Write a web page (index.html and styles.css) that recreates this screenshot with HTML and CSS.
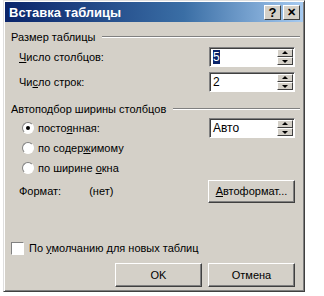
FILE: index.html
```html
<!doctype html>
<html lang="ru">
<head>
  <meta charset="UTF-8">
  <title>Вставка таблицы</title>
  <link rel="stylesheet" href="styles.css">
</head>
<body>
  <div class="dialog">
    <div class="titlebar">
      <span class="title">Вставка таблицы</span>
      <span class="tbtn">?</span>
      <span class="tbtn close">&#x2715;</span>
    </div>
    <div class="content">
      <div class="group">
        <div class="group-head"><span>Размер таблицы</span><i></i></div>
        <div class="row">
          <span><u>Ч</u>исло столбцов:</span>
          <div class="spin"><span class="value"><b class="sel">5</b></span><span class="arrows"><em class="up"></em><em class="down"></em></span></div>
        </div>
        <div class="row">
          <span>Чи<u>с</u>ло строк:</span>
          <div class="spin"><span class="value">2</span><span class="arrows"><em class="up"></em><em class="down"></em></span></div>
        </div>
      </div>
      <div class="group">
        <div class="group-head"><span>Автоподбор ширины столбцов</span><i></i></div>
        <div class="row opt-row">
          <span class="opt"><span class="radio checked"></span><span>посто<u>я</u>нная:</span></span>
          <div class="spin"><span class="value">Авто</span><span class="arrows"><em class="up"></em><em class="down"></em></span></div>
        </div>
        <div class="line"><span class="opt"><span class="radio"></span><span>по содер<u>ж</u>имому</span></span></div>
        <div class="line"><span class="opt"><span class="radio"></span><span>по ширине <u>о</u>кна</span></span></div>
        <div class="row fmt">
          <span class="format"><span>Формат:</span><span>(нет)</span></span>
          <div class="button"><u>А</u>втоформат...</div>
        </div>
      </div>
      <div class="check"><span class="box"></span><span>По <u>у</u>молчанию для новых таблиц</span></div>
      <div class="buttons">
        <div class="button">OK</div>
        <div class="button">Отмена</div>
      </div>
    </div>
  </div>
</body>
</html>
```

FILE: styles.css
```css
body {
  margin: 0;
  background: #ffffff;
  font-family: "Liberation Sans", Arial, sans-serif;
  font-size: 11px;
  color: #000000;
}

.dialog {
  width: 302px;
  height: 292px;
  margin: 0 0 0 3px;
  background: #d4d0c8;
  border: 1px solid;
  border-color: #dfdfdf #404040 #404040 #dfdfdf;
  box-shadow: inset 1px 1px 0 #ffffff, inset -1px -1px 0 #808080;
  padding: 1px;
  box-sizing: border-box;
}

.titlebar {
  height: 20px;
  display: flex;
  align-items: center;
  padding: 0 3px 0 4px;
  background: linear-gradient(to right, #0a246a, #3a6ea5 60%, #a6caf0);
  color: #ffffff;
}

.title {
  flex: 1;
  font-weight: bold;
  font-size: 13px;
}

.tbtn {
  width: 15px;
  height: 13px;
  margin-left: 2px;
  background: #d4d0c8;
  color: #000000;
  font-weight: bold;
  font-size: 13px;
  line-height: 13px;
  text-align: center;
  border: 1px solid;
  border-color: #ffffff #404040 #404040 #ffffff;
}

.tbtn.close {
  font-size: 11px;
}

.content {
  padding: 6px 8px 0 6px;
}

.group-head {
  display: flex;
  align-items: center;
  height: 18px;
}

.group-head i {
  flex: 1;
  margin-left: 7px;
  margin-right: -5px;
  height: 0;
  border-top: 1px solid #808080;
  border-bottom: 1px solid #ffffff;
}

.row {
  display: flex;
  justify-content: space-between;
  align-items: center;
  height: 22px;
  margin-top: 3px;
  padding-left: 8px;
}

.group-head + .row {
  margin-top: 0;
}

.group + .group {
  margin-top: 7px;
}

.opt-row {
  height: 20px;
  padding-left: 11px;
}

.line {
  display: flex;
  align-items: center;
  height: 20px;
  padding-left: 11px;
}

.spin {
  width: 86px;
  height: 20px;
  display: flex;
  background: #ffffff;
  border: 1px solid;
  border-color: #808080 #ffffff #ffffff #808080;
  box-shadow: inset 1px 1px 0 #404040;
  box-sizing: border-box;
}

.value {
  flex: 1;
  padding: 2px 0 0 3px;
  font-size: 12px;
}

.sel {
  font-weight: normal;
  background: #0a246a;
  color: #ffffff;
}

.arrows {
  width: 16px;
  display: flex;
  flex-direction: column;
  padding: 1px 1px 1px 0;
}

.arrows em {
  flex: 1;
  position: relative;
  background: #d4d0c8;
  border: 1px solid;
  border-color: #ffffff #404040 #404040 #ffffff;
}

.arrows em::after {
  content: '';
  position: absolute;
  left: 4px;
  border: 3px solid transparent;
}

.arrows em.up::after {
  top: -2px;
  border-bottom: 3px solid #000000;
}

.arrows em.down::after {
  top: 2px;
  border-top: 3px solid #000000;
}

.opt {
  display: flex;
  align-items: center;
}

.radio {
  width: 10px;
  height: 10px;
  margin-right: 4px;
  border-radius: 50%;
  background: #ffffff;
  border: 1px solid;
  border-color: #808080 #ffffff #ffffff #808080;
  position: relative;
}

.radio.checked::after {
  content: '';
  position: absolute;
  left: 3px;
  top: 3px;
  width: 4px;
  height: 4px;
  border-radius: 50%;
  background: #000000;
}

.row.fmt {
  height: 26px;
  margin-top: 0;
}

.format {
  display: flex;
  gap: 28px;
}

.button {
  width: 87px;
  height: 23px;
  line-height: 21px;
  text-align: center;
  background: #d4d0c8;
  border: 1px solid;
  border-color: #ffffff #404040 #404040 #ffffff;
  box-shadow: inset -1px -1px 0 #808080;
  box-sizing: border-box;
}

.check {
  display: flex;
  align-items: center;
  margin-top: 34px;
  height: 20px;
}

.box {
  width: 11px;
  height: 11px;
  margin-right: 5px;
  background: #ffffff;
  border: 1px solid;
  border-color: #808080 #ffffff #ffffff #808080;
}

.buttons {
  display: flex;
  justify-content: flex-end;
  gap: 6px;
  margin-top: 5px;
}

.buttons .button {
  height: 24px;
  line-height: 22px;
}
```
